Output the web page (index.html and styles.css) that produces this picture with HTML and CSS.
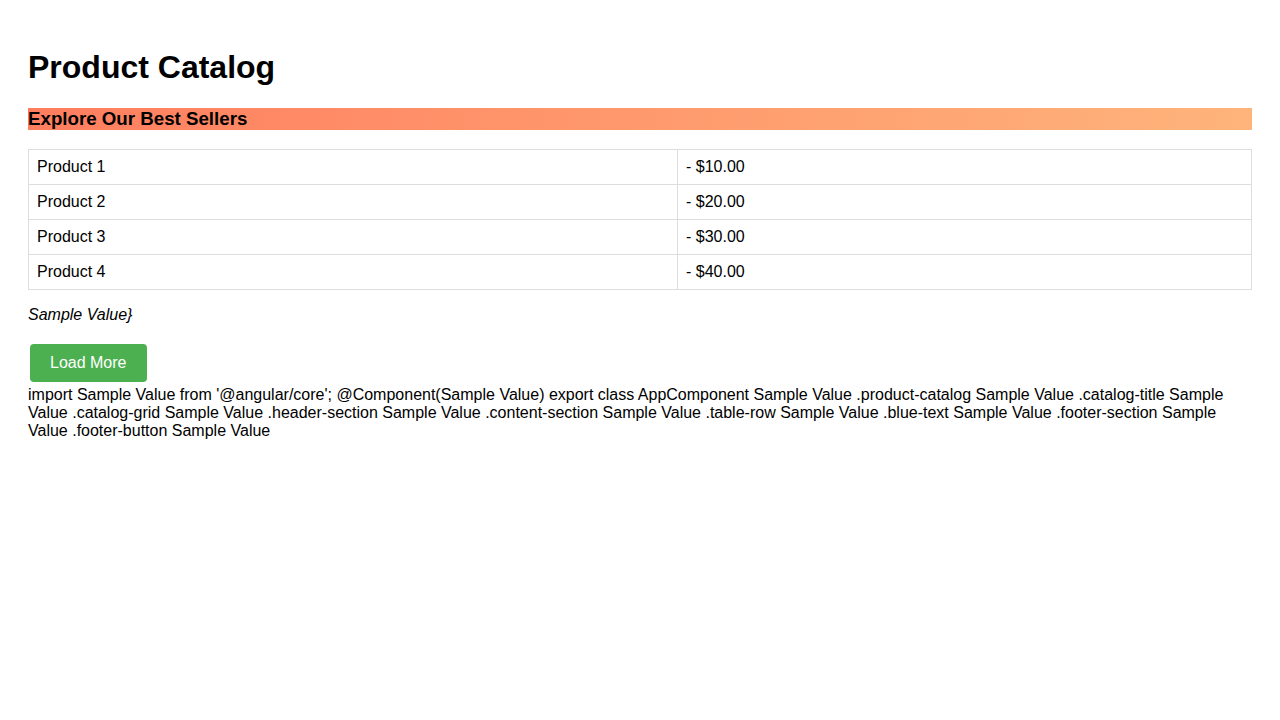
FILE: index.html
```html
<!DOCTYPE html>
<html>
<head>
<meta charset="utf-8">
<link rel="stylesheet" href="styles.css">
</head>
<body>
<div class="product-catalog">
  <h1 class="catalog-title">Product Catalog</h1>
  <h3 class="header-section">Explore Our Best Sellers</h3>
  <table class="catalog-grid">
    <colgroup><col class="col-name"><col></colgroup>
    <tr class="table-row"><td>Product 1</td><td>- $10.00</td></tr>
    <tr class="table-row"><td>Product 2</td><td>- $20.00</td></tr>
    <tr class="table-row"><td>Product 3</td><td>- $30.00</td></tr>
    <tr class="table-row"><td>Product 4</td><td>- $40.00</td></tr>
  </table>
  <p class="content-section">Sample Value}</p>
  <div class="footer-section"><button class="footer-button">Load More</button></div>
  <div class="code-text">import Sample Value from '@angular/core'; @Component(Sample Value) export class AppComponent Sample Value .product-catalog Sample Value .catalog-title Sample Value .catalog-grid Sample Value .header-section Sample Value .content-section Sample Value .table-row Sample Value .blue-text Sample Value .footer-section Sample Value .footer-button Sample Value</div>
</div>
</body>
</html>
```
FILE: styles.css
```css
body {
  margin: 8px;
  font-family: "Liberation Sans", Arial, sans-serif;
  color: #000;
  background: #fff;
}
.product-catalog {
  padding: 20px;
}
.catalog-title {
  font-size: 32px;
  font-weight: bold;
  margin: 21.44px 0;
}
.header-section {
  font-size: 18.72px;
  font-weight: bold;
  margin: 18.72px 0;
  background: linear-gradient(to right, #ff7e5f, #feb47b);
}
.catalog-grid {
  width: 100%;
  border-collapse: collapse;
}
.col-name {
  width: 649px;
}
.catalog-grid td {
  border: 1px solid #ddd;
  padding: 8px;
  font-size: 16px;
}
.content-section {
  font-style: italic;
  margin: 16px 0;
}
.footer-button {
  background: #4CAF50;
  color: #fff;
  border: none;
  border-radius: 4px;
  padding: 10px 20px;
  margin: 4px 2px;
  font-family: "Liberation Sans", Arial, sans-serif;
  font-size: 16px;
  cursor: pointer;
}
.code-text {
  font-size: 16px;
}
```
